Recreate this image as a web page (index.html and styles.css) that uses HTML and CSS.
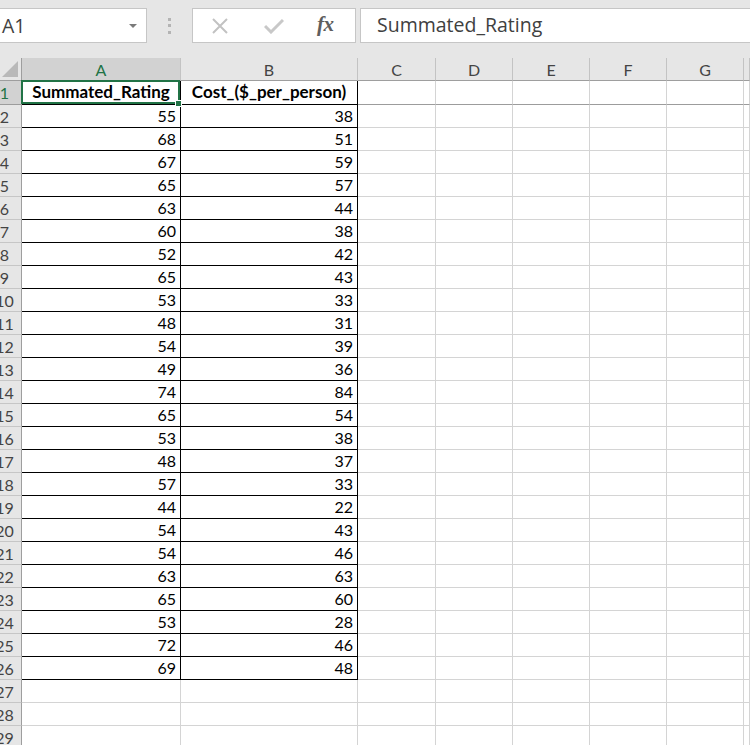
FILE: index.html
```html
<!DOCTYPE html>
<html>
<head>
<meta charset="utf-8">
<link rel="stylesheet" href="styles.css">
</head>
<body>
<div class="toolbar">
  <div class="namebox"><span class="nb-text">A1</span><span class="nb-arrow"></span></div>
  <div class="grip"><i></i><i></i><i></i></div>
  <div class="fbtns">
    <svg class="ic-x" width="18" height="18" viewBox="0 0 18 18"><path d="M2 2 L16 16 M16 2 L2 16" stroke="#c2c2c2" stroke-width="2" fill="none"/></svg>
    <svg class="ic-ok" width="20" height="16" viewBox="0 0 20 16"><path d="M1 8 L7 14 L19 2" stroke="#c8c8c8" stroke-width="3" fill="none"/></svg>
    <span class="fx">fx</span>
  </div>
  <div class="formula">Summated_Rating</div>
</div>
<div class="sheet">
  <div class="c corner"><svg width="16" height="16" viewBox="0 0 16 16"><path d="M16 0 L16 16 L0 16 Z" fill="#b9b9b9"/></svg></div>
  <div class="c ch sel">A</div><div class="c ch">B</div><div class="c ch">C</div><div class="c ch">D</div><div class="c ch">E</div><div class="c ch">F</div><div class="c ch">G</div><div class="c ch"></div>

  <div class="c rh sel r1">1</div><div class="c d hd r1 active">Summated_Rating</div><div class="c d hd r1">Cost_($_per_person)</div><div class="c r1"></div><div class="c r1"></div><div class="c r1"></div><div class="c r1"></div><div class="c r1"></div><div class="c r1"></div>

  <div class="c rh">2</div><div class="c d">55</div><div class="c d">38</div><div class="c"></div><div class="c"></div><div class="c"></div><div class="c"></div><div class="c"></div><div class="c"></div>
  <div class="c rh">3</div><div class="c d">68</div><div class="c d">51</div><div class="c"></div><div class="c"></div><div class="c"></div><div class="c"></div><div class="c"></div><div class="c"></div>
  <div class="c rh">4</div><div class="c d">67</div><div class="c d">59</div><div class="c"></div><div class="c"></div><div class="c"></div><div class="c"></div><div class="c"></div><div class="c"></div>
  <div class="c rh">5</div><div class="c d">65</div><div class="c d">57</div><div class="c"></div><div class="c"></div><div class="c"></div><div class="c"></div><div class="c"></div><div class="c"></div>
  <div class="c rh">6</div><div class="c d">63</div><div class="c d">44</div><div class="c"></div><div class="c"></div><div class="c"></div><div class="c"></div><div class="c"></div><div class="c"></div>
  <div class="c rh">7</div><div class="c d">60</div><div class="c d">38</div><div class="c"></div><div class="c"></div><div class="c"></div><div class="c"></div><div class="c"></div><div class="c"></div>
  <div class="c rh">8</div><div class="c d">52</div><div class="c d">42</div><div class="c"></div><div class="c"></div><div class="c"></div><div class="c"></div><div class="c"></div><div class="c"></div>
  <div class="c rh">9</div><div class="c d">65</div><div class="c d">43</div><div class="c"></div><div class="c"></div><div class="c"></div><div class="c"></div><div class="c"></div><div class="c"></div>
  <div class="c rh">10</div><div class="c d">53</div><div class="c d">33</div><div class="c"></div><div class="c"></div><div class="c"></div><div class="c"></div><div class="c"></div><div class="c"></div>
  <div class="c rh">11</div><div class="c d">48</div><div class="c d">31</div><div class="c"></div><div class="c"></div><div class="c"></div><div class="c"></div><div class="c"></div><div class="c"></div>
  <div class="c rh">12</div><div class="c d">54</div><div class="c d">39</div><div class="c"></div><div class="c"></div><div class="c"></div><div class="c"></div><div class="c"></div><div class="c"></div>
  <div class="c rh">13</div><div class="c d">49</div><div class="c d">36</div><div class="c"></div><div class="c"></div><div class="c"></div><div class="c"></div><div class="c"></div><div class="c"></div>
  <div class="c rh">14</div><div class="c d">74</div><div class="c d">84</div><div class="c"></div><div class="c"></div><div class="c"></div><div class="c"></div><div class="c"></div><div class="c"></div>
  <div class="c rh">15</div><div class="c d">65</div><div class="c d">54</div><div class="c"></div><div class="c"></div><div class="c"></div><div class="c"></div><div class="c"></div><div class="c"></div>
  <div class="c rh">16</div><div class="c d">53</div><div class="c d">38</div><div class="c"></div><div class="c"></div><div class="c"></div><div class="c"></div><div class="c"></div><div class="c"></div>
  <div class="c rh">17</div><div class="c d">48</div><div class="c d">37</div><div class="c"></div><div class="c"></div><div class="c"></div><div class="c"></div><div class="c"></div><div class="c"></div>
  <div class="c rh">18</div><div class="c d">57</div><div class="c d">33</div><div class="c"></div><div class="c"></div><div class="c"></div><div class="c"></div><div class="c"></div><div class="c"></div>
  <div class="c rh">19</div><div class="c d">44</div><div class="c d">22</div><div class="c"></div><div class="c"></div><div class="c"></div><div class="c"></div><div class="c"></div><div class="c"></div>
  <div class="c rh">20</div><div class="c d">54</div><div class="c d">43</div><div class="c"></div><div class="c"></div><div class="c"></div><div class="c"></div><div class="c"></div><div class="c"></div>
  <div class="c rh">21</div><div class="c d">54</div><div class="c d">46</div><div class="c"></div><div class="c"></div><div class="c"></div><div class="c"></div><div class="c"></div><div class="c"></div>
  <div class="c rh">22</div><div class="c d">63</div><div class="c d">63</div><div class="c"></div><div class="c"></div><div class="c"></div><div class="c"></div><div class="c"></div><div class="c"></div>
  <div class="c rh">23</div><div class="c d">65</div><div class="c d">60</div><div class="c"></div><div class="c"></div><div class="c"></div><div class="c"></div><div class="c"></div><div class="c"></div>
  <div class="c rh">24</div><div class="c d">53</div><div class="c d">28</div><div class="c"></div><div class="c"></div><div class="c"></div><div class="c"></div><div class="c"></div><div class="c"></div>
  <div class="c rh">25</div><div class="c d">72</div><div class="c d">46</div><div class="c"></div><div class="c"></div><div class="c"></div><div class="c"></div><div class="c"></div><div class="c"></div>
  <div class="c rh">26</div><div class="c d">69</div><div class="c d">48</div><div class="c"></div><div class="c"></div><div class="c"></div><div class="c"></div><div class="c"></div><div class="c"></div>
  <div class="c rh">27</div><div class="c"></div><div class="c"></div><div class="c"></div><div class="c"></div><div class="c"></div><div class="c"></div><div class="c"></div><div class="c"></div>
  <div class="c rh">28</div><div class="c"></div><div class="c"></div><div class="c"></div><div class="c"></div><div class="c"></div><div class="c"></div><div class="c"></div><div class="c"></div>
  <div class="c rh">29</div><div class="c"></div><div class="c"></div><div class="c"></div><div class="c"></div><div class="c"></div><div class="c"></div><div class="c"></div><div class="c"></div>
</div>
</body>
</html>
```
FILE: styles.css
```css
html, body {
  margin: 0;
  padding: 0;
  background: #ffffff;
  overflow: hidden;
}
body {
  width: 750px;
  height: 745px;
  font-family: "Lato", "Liberation Sans", sans-serif;
}
.toolbar {
  height: 58px;
  background: #e6e6e6;
  display: flex;
  align-items: flex-start;
  padding-top: 8px;
  box-sizing: border-box;
  overflow: hidden;
}
.namebox {
  margin-left: -2px;
  width: 149px;
  height: 35px;
  flex: none;
  box-sizing: border-box;
  background: #fff;
  border: 1px solid #c6c6c6;
  display: flex;
  align-items: center;
  position: relative;
}
.nb-text {
  font-family: "Open Sans", "Noto Sans", sans-serif;
  font-size: 19.5px;
  color: #404040;
  margin-left: 3px;
}
.nb-arrow {
  margin-left: auto;
  margin-right: 9px;
  width: 0;
  height: 0;
  border-left: 4px solid transparent;
  border-right: 4px solid transparent;
  border-top: 4px solid #7a7a7a;
}
.grip {
  width: 45px;
  flex: none;
  height: 35px;
  display: flex;
  flex-direction: column;
  align-items: center;
  justify-content: center;
  gap: 3.5px;
}
.grip i {
  display: block;
  width: 3px;
  height: 3px;
  background: #b4b4b4;
}
.fbtns {
  width: 164px;
  height: 35px;
  flex: none;
  box-sizing: border-box;
  background: #fff;
  border: 1px solid #c6c6c6;
  display: flex;
  align-items: center;
}
.ic-x { margin-left: 18px; }
.ic-ok { margin-left: 35px; }
.fx {
  margin-left: 33px;
  font-family: "Liberation Serif", "DejaVu Serif", serif;
  font-style: italic;
  font-weight: bold;
  font-size: 21px;
  color: #5e5e5e;
  letter-spacing: -0.5px;
  margin-top: -2px;
}
.formula {
  margin-left: 4px;
  height: 35px;
  flex: 1;
  min-width: 400px;
  box-sizing: border-box;
  background: #fff;
  border: 1px solid #c6c6c6;
  border-right: none;
  font-family: "Open Sans", "Noto Sans", sans-serif;
  font-size: 19.5px;
  color: #404040;
  padding-left: 16px;
  line-height: 32px;
}
.sheet {
  margin-left: -12px;
  width: 762px;
  display: grid;
  grid-template-columns: 34px 159px 177px 78px 77px 77px 77px 77px 1fr;
  grid-template-rows: 23px 24px;
  grid-auto-rows: 23px;
}
.c {
  box-sizing: border-box;
  border-right: 1px solid #d4d4d4;
  border-bottom: 1px solid #d4d4d4;
  font-size: 16px;
  color: #000;
  line-height: 22px;
  white-space: nowrap;
  overflow: visible;
  position: relative;
}
.corner {
  background: #e6e6e6;
  border-right: 1px solid #9e9e9e;
  border-bottom: 1px solid #9e9e9e;
  display: flex;
  justify-content: flex-end;
  align-items: flex-end;
  padding: 0 3px 3px 0;
}
.corner svg { display: block; }
.ch {
  background: #e6e6e6;
  border-right: 1px solid #c3c3c3;
  border-bottom: 1px solid #9e9e9e;
  text-align: center;
  color: #444;
  font-size: 16px;
  line-height: 23px;
}
.ch.sel {
  background: #d2d2d2;
  color: #217346;
}
.rh {
  background: #e6e6e6;
  border-right: 1px solid #9e9e9e;
  border-bottom: 1px solid #c6c6c6;
  text-align: center;
  color: #444;
  font-size: 16px;
  line-height: 23px;
}
.rh.sel {
  background: #d2d2d2;
  color: #217346;
}
.r1 {
  border-bottom: 1px solid #9c9c9c;
}
.d {
  border-right: 1px solid #000;
  border-bottom: 1px solid #000;
  text-align: right;
  padding-right: 4px;
  padding-top: 0;
}
.hd {
  text-align: center;
  font-weight: bold;
  font-size: 17px;
  padding-right: 0;
  border-bottom: 1px solid #000;
}
.active::after {
  content: "";
  position: absolute;
  top: -1px;
  left: -1px;
  right: 0;
  bottom: 0;
  border: 2px solid #217346;
  z-index: 2;
}
.active::before {
  content: "";
  position: absolute;
  right: -2px;
  bottom: -3px;
  width: 5px;
  height: 5px;
  background: #217346;
  border: 1px solid #fff;
  z-index: 3;
}
```
